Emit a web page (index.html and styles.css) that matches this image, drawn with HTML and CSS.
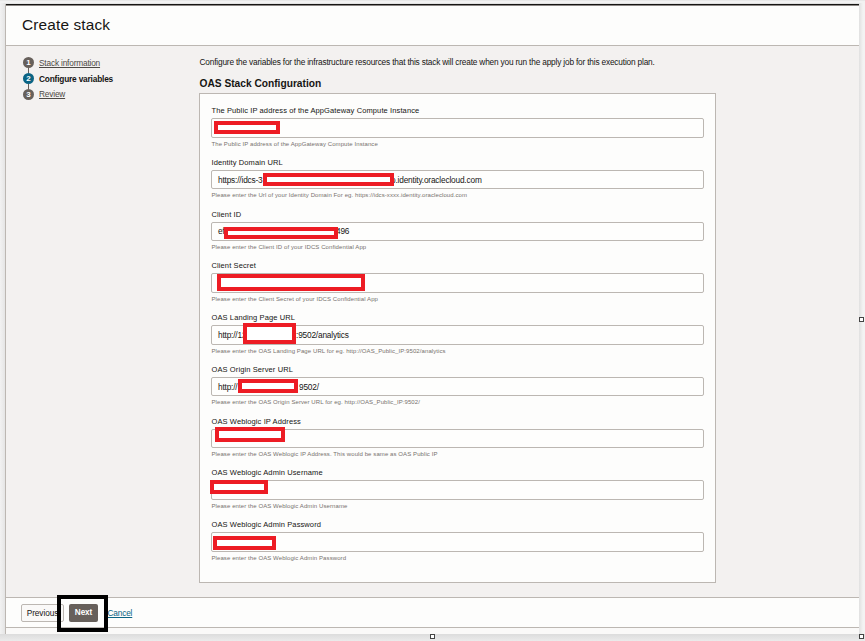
FILE: index.html
```html
<!DOCTYPE html>
<html lang="en">
<head>
<meta charset="utf-8">
<title>Create stack</title>
<link rel="stylesheet" href="styles.css">
</head>
<body>
<div class="dialog">
  <header class="header"><h1>Create stack</h1></header>
  <div class="body">
    <nav class="steps">
      <div class="step"><span class="num">1</span><a class="s1">Stack information</a></div>
      <div class="step current"><span class="num">2</span><b class="s2">Configure variables</b></div>
      <div class="step"><span class="num">3</span><a class="s3">Review</a></div>
    </nav>
    <main class="content">
      <p class="intro"><span>Configure the variables for the infrastructure resources that this stack will create when you run the apply job for this execution plan.</span></p>
      <h2><span>OAS Stack Configuration</span></h2>
      <section class="panel">
        <div class="field"><label>The Public IP address of the AppGateway Compute Instance</label><div class="input"><i class="mask m1"></i></div><small>The Public IP address of the AppGateway Compute Instance</small></div>
        <div class="field"><label>Identity Domain URL</label><div class="input"><span>https://idcs-3</span><span class="tail t2">o.identity.oraclecloud.com</span><i class="mask m2"></i></div><small>Please enter the Url of your Identity Domain For eg. https://idcs-xxxx.identity.oraclecloud.com</small></div>
        <div class="field"><label>Client ID</label><div class="input"><span>ef</span><span class="tail t3">496</span><i class="mask m3"></i></div><small>Please enter the Client ID of your IDCS Confidential App</small></div>
        <div class="field"><label>Client Secret</label><div class="input"><i class="mask m4"></i></div><small>Please enter the Client Secret of your IDCS Confidential App</small></div>
        <div class="field"><label>OAS Landing Page URL</label><div class="input"><span>http://12</span><span class="tail t5">:9502/analytics</span><i class="mask m5"></i></div><small>Please enter the OAS Landing Page URL for eg. http://OAS_Public_IP:9502/analytics</small></div>
        <div class="field"><label>OAS Origin Server URL</label><div class="input"><span>http://</span><span class="tail t6">9502/</span><i class="mask m6"></i></div><small>Please enter the OAS Origin Server URL for eg. http://OAS_Public_IP:9502/</small></div>
        <div class="field"><label>OAS Weblogic IP Address</label><div class="input"><i class="mask m7"></i></div><small>Please enter the OAS Weblogic IP Address. This would be same as OAS Public IP</small></div>
        <div class="field"><label>OAS Weblogic Admin Username</label><div class="input"><i class="mask m8"></i></div><small>Please enter the OAS Weblogic Admin Username</small></div>
        <div class="field"><label>OAS Weblogic Admin Password</label><div class="input"><i class="mask m9"></i></div><small>Please enter the OAS Weblogic Admin Password</small></div>
      </section>
    </main>
  </div>
  <footer class="footer">
    <button class="btn">Previous</button>
    <button class="btn primary">Next</button>
    <a class="cancel">Cancel</a>
    <i class="highlight"></i>
  </footer>
  <div class="strip"></div>
</div>
<i class="handle right"></i><i class="handle bottom"></i><i class="handle corner"></i>
</body>
</html>
```
FILE: styles.css
```css
* { box-sizing: border-box; }
body {
  margin: 0;
  height: 641px;
  padding: 4px 6px 7px 5px;
  position: relative;
  overflow: hidden;
  background: linear-gradient(#e8e8e8 0 1px, #f2f2f2 1px 3px, transparent 3px), linear-gradient(to bottom, transparent 634px, #dcdcdc 634px, #ebebeb 641px), linear-gradient(to right, #f2f2f2 0, #e5e5e5 5px, #e0e0e0 859px, #f3f3f3 863px);
  font: 8.3px/10px "Liberation Sans", Arial, sans-serif;
  letter-spacing: -.18px;
  color: #161513;
}
.dialog {
  height: 630px;
  display: flex;
  flex-direction: column;
  background: #f3f1f0;
  border-left: 1px solid #bcb7b2;
}
.header {
  height: 42px;
  flex: none;
  border-top: 1px solid #161513;
  border-bottom: 1px solid #bcb7b2;
  box-shadow: inset 0 1px #8b8785;
  background: #fdfdfc;
  padding: 10px 0 0 16px;
}
h1 { margin: 0; font-size: 15.4px; line-height: 20px; font-weight: 400; letter-spacing: .15px; }
.body { flex: 1; display: flex; }
.steps { width: 193px; padding: 9px 0 0 17px; }
.step { display: flex; align-items: center; height: 15.8px; gap: 5px; position: relative; }
.step + .step::before { content: ""; position: absolute; left: 5px; top: -3px; width: 1px; height: 5px; background: #67605b; }
.num { width: 11px; height: 11px; border-radius: 50%; background: #67605b; color: #fff; font-size: 8px; font-weight: 700; line-height: 11px; text-align: center; }
.current .num { background: #0b6484; }
.step a { color: #4d4945; text-decoration: underline; }
.content { width: 517px; }
.intro { margin: 11px 0 0 .5px; height: 10px; white-space: nowrap; }
h2 { margin: 10px 0 0 .5px; font-size: 10.2px; line-height: 14px; height: 16px; white-space: nowrap; letter-spacing: 0; }
.panel { height: 490px; border: 1px solid #bcb7b2; background: #fdfdfc; padding: 12px 11px 0; }
.field { height: 51.75px; }
.field label { display: block; height: 12px; padding-left: .5px; font-size: 7.5px; line-height: 10px; white-space: nowrap; letter-spacing: .11px; }
.input { height: 19.5px; border: 1px solid #bcb7b2; border-radius: 2px; position: relative; display: flex; align-items: center; padding-left: 6px; white-space: nowrap; background: #fefefd; }
.tail { position: absolute; }
.t2 { left: 179px; } .t3 { left: 124px; } .t5 { left: 84px; } .t6 { left: 87px; }
small { display: block; margin-top: 1px; padding-left: .5px; font-size: 6px; line-height: 10px; color: #77716d; white-space: nowrap; letter-spacing: .09px; }
.mask { position: absolute; border: 4px solid #ed1c24; background: #fff; }
.m1 { left: 2px; top: 2px; width: 66px; height: 13px; }
.m2 { left: 51px; top: 2px; width: 131px; height: 13px; }
.m3 { left: 12px; top: 4px; width: 114px; height: 12px; }
.m4 { left: 5px; top: 0; width: 148px; height: 17px; }
.m5 { left: 31px; top: -3px; width: 53px; height: 21px; }
.m6 { left: 26px; top: 1px; width: 60px; height: 14px; }
.m7 { left: 3px; top: -3px; width: 70px; height: 15px; }
.m8 { left: -2px; top: -1px; width: 58px; height: 14px; }
.m9 { left: 1px; top: 3px; width: 63px; height: 14px; }
.footer { height: 31px; flex: none; border-top: 1px solid #bcb7b2; border-bottom: 1px solid #bcb7b2; background: #fdfdfc; display: flex; align-items: center; position: relative; padding-left: 15px; }
.btn { font: inherit; letter-spacing: -.1px; color: #161513; height: 18px; width: 43px; padding: 0; border: 1px solid #bcb7b2; border-radius: 2px; background: #faf9f8; text-align: center; }
.primary { width: 29px; margin-left: 5px; border: 0; background: #67605b; color: #fff; font-weight: 700; font-size: 8.2px; }
.cancel { margin-left: 9.5px; color: #0b6484; text-decoration: underline; }
.highlight { position: absolute; left: 51px; top: -3px; width: 51px; height: 37px; border: 4px solid #000; z-index: 1; }
.strip { height: 6px; flex: none; background: #faf9f8; }
.handle { position: absolute; width: 5px; height: 5px; border: 1px solid #444; background: #fff; }
.right { left: 859px; top: 317px; }
.bottom { left: 430px; top: 634px; }
.corner { left: 859px; top: 634px; }
```
